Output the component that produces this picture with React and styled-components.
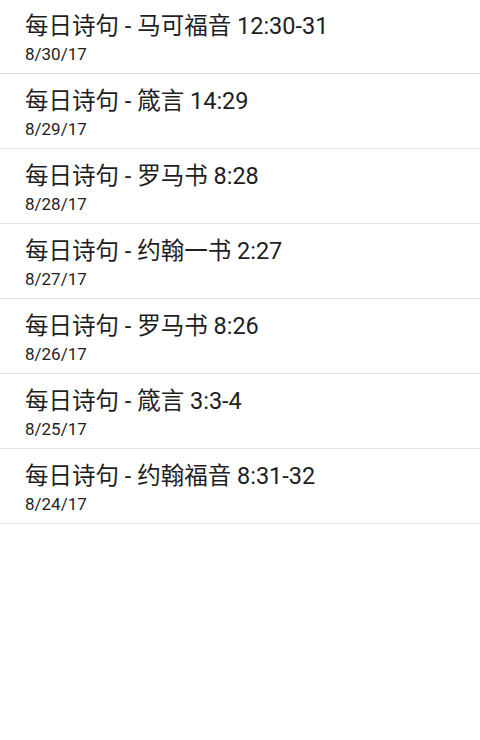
import React from 'react';
import styled, { createGlobalStyle } from 'styled-components';

const GlobalStyle = createGlobalStyle`
  html, body {
    margin: 0;
    padding: 0;
    background: #ffffff;
  }
  body {
    font-family: Roboto, "Noto Sans CJK SC", sans-serif;
  }
`;

const List = styled.ul`
  list-style: none;
  margin: -1px 0 0 0;
  padding: 0;
  width: 480px;
`;

const Row = styled.li`
  display: flex;
  flex-direction: column;
  padding: 11px 25px 7px;
  border-bottom: 1px solid #e2e2e2;
`;

const Title = styled.div`
  font-size: 23.5px;
  line-height: 32px;
  color: #1e1e1e;
  white-space: nowrap;
`;

const Date = styled.div`
  font-size: 17px;
  line-height: 24px;
  color: #1e1e1e;
`;

const items = [
  { id: 1, title: '每日诗句 - 马可福音 12:30-31', date: '8/30/17' },
  { id: 2, title: '每日诗句 - 箴言 14:29', date: '8/29/17' },
  { id: 3, title: '每日诗句 - 罗马书 8:28', date: '8/28/17' },
  { id: 4, title: '每日诗句 - 约翰一书 2:27', date: '8/27/17' },
  { id: 5, title: '每日诗句 - 罗马书 8:26', date: '8/26/17' },
  { id: 6, title: '每日诗句 - 箴言 3:3-4', date: '8/25/17' },
  { id: 7, title: '每日诗句 - 约翰福音 8:31-32', date: '8/24/17' },
];

const App = () => (
  <>
    <GlobalStyle />
    <List>
      {items.map(item => (
        <Row key={item.id}>
          <Title>{item.title}</Title>
          <Date>{item.date}</Date>
        </Row>
      ))}
    </List>
  </>
);

export default App;
